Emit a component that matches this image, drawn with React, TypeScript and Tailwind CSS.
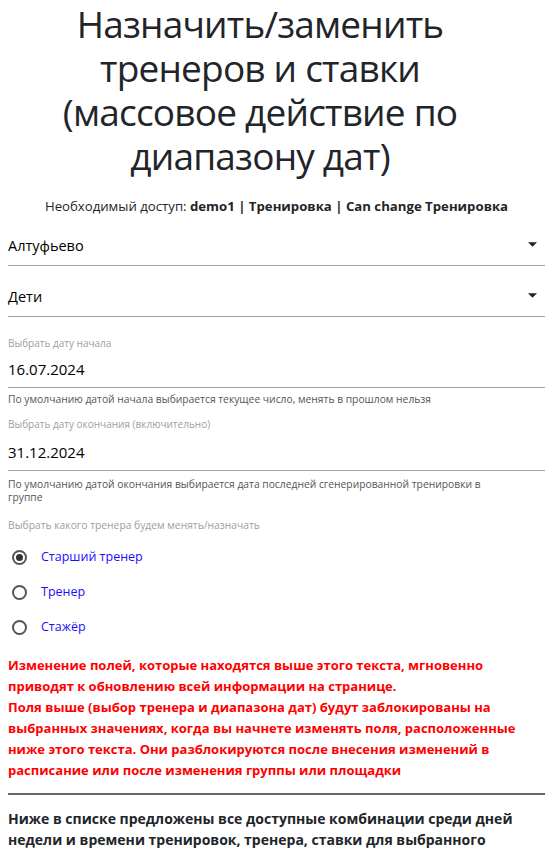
import React from 'react';

const selects = ['Алтуфьево', 'Дети'];

const coachRoles = [
    { id: 'senior', label: 'Старший тренер', checked: true },
    { id: 'coach', label: 'Тренер', checked: false },
    { id: 'intern', label: 'Стажёр', checked: false }
];

const SelectField: React.FC<{ value: string }> = ({ value }) => (
    <div className="flex h-[40px] items-center justify-between border-b border-[#9e9e9e] pr-[8px]">
        <span className="text-[14.5px] text-black">{value}</span>
        <svg width="9" height="5" viewBox="0 0 10 5" className="mt-[-2px]">
            <path d="M0 0h10L5 5z" fill="#222" />
        </svg>
    </div>
);

const DateField: React.FC<{ label: string; value: string; help: string; tall?: boolean }> = ({ label, value, help, tall }) => (
    <div>
        <div className={`text-[10px] leading-[18px] text-[#9e9e9e] ${tall ? 'pb-[2px]' : ''}`}>{label}</div>
        <div className="flex h-[36px] items-center border-b border-[#9e9e9e] text-[15px] text-black">{value}</div>
        <div className={`max-w-[500px] text-[10.3px] leading-[13px] text-[#555] ${tall ? 'mt-[7px]' : 'mt-[5px]'}`}>{help}</div>
    </div>
);

const App: React.FC = () => {
    return (
        <div className="min-h-screen bg-white pl-[8px] pr-[12px] text-[#212529]" style={{ fontFamily: '"Open Sans", "Noto Sans", sans-serif' }}>
            <h1 className="ml-[32px] w-[440px] pt-[2px] text-center text-[37px] font-normal leading-[44px] tracking-[-0.8px]">
                Назначить/заменить тренеров и ставки (массовое действие по диапазону дат)
            </h1>
            <p className="mt-[18px] text-center text-[13.2px] leading-[20px]">
                Необходимый доступ: <b>demo1 | Тренировка | Can change Тренировка</b>
            </p>

            <div className="mt-[10px] flex flex-col gap-[11px]">
                {selects.map((s) => (
                    <SelectField key={s} value={s} />
                ))}
            </div>

            <div className="mt-[17px]">
                <DateField
                    label="Выбрать дату начала"
                    value="16.07.2024"
                    help="По умолчанию датой начала выбирается текущее число, менять в прошлом нельзя"
                />
            </div>
            <div className="mt-[9px]">
                <DateField
                    tall
                    label="Выбрать дату окончания (включительно)"
                    value="31.12.2024"
                    help="По умолчанию датой окончания выбирается дата последней сгенерированной тренировки в группе"
                />
            </div>

            <div className="mt-[13px] text-[10.3px] leading-[16px] text-[#9e9e9e]">Выбрать какого тренера будем менять/назначать</div>
            <div className="mt-[7px] flex flex-col">
                {coachRoles.map((r) => (
                    <label key={r.id} className="flex h-[35px] items-center">
                        <span className="ml-[4px] flex h-[15px] w-[15px] items-center justify-center rounded-full border-2 border-[#555]">
                            {r.checked && <span className="h-[7px] w-[7px] rounded-full bg-[#333]" />}
                        </span>
                        <span className="ml-[14px] text-[12.5px] text-[#1a0dff]">{r.label}</span>
                    </label>
                ))}
            </div>

            <p className="mt-[10px] text-[13px] font-bold leading-[21px] text-[#ff0000]">
                Изменение полей, которые находятся выше этого текста, мгновенно приводят к обновлению всей информации на странице.
                <br />
                Поля выше (выбор тренера и диапазона дат) будут заблокированы на выбранных значениях, когда вы начнете изменять поля, расположенные ниже этого текста. Они разблокируются после внесения изменений в расписание или после изменения группы или площадки
            </p>

            <hr className="mt-[12px] border-t-2 border-[#666]" />

            <p className="mt-[13px] text-[14px] font-bold leading-[21px] text-[#212529]">
                Ниже в списке предложены все доступные комбинации среди дней недели и времени тренировок, тренера, ставки для выбранного периода
            </p>
        </div>
    );
};

export default App;
